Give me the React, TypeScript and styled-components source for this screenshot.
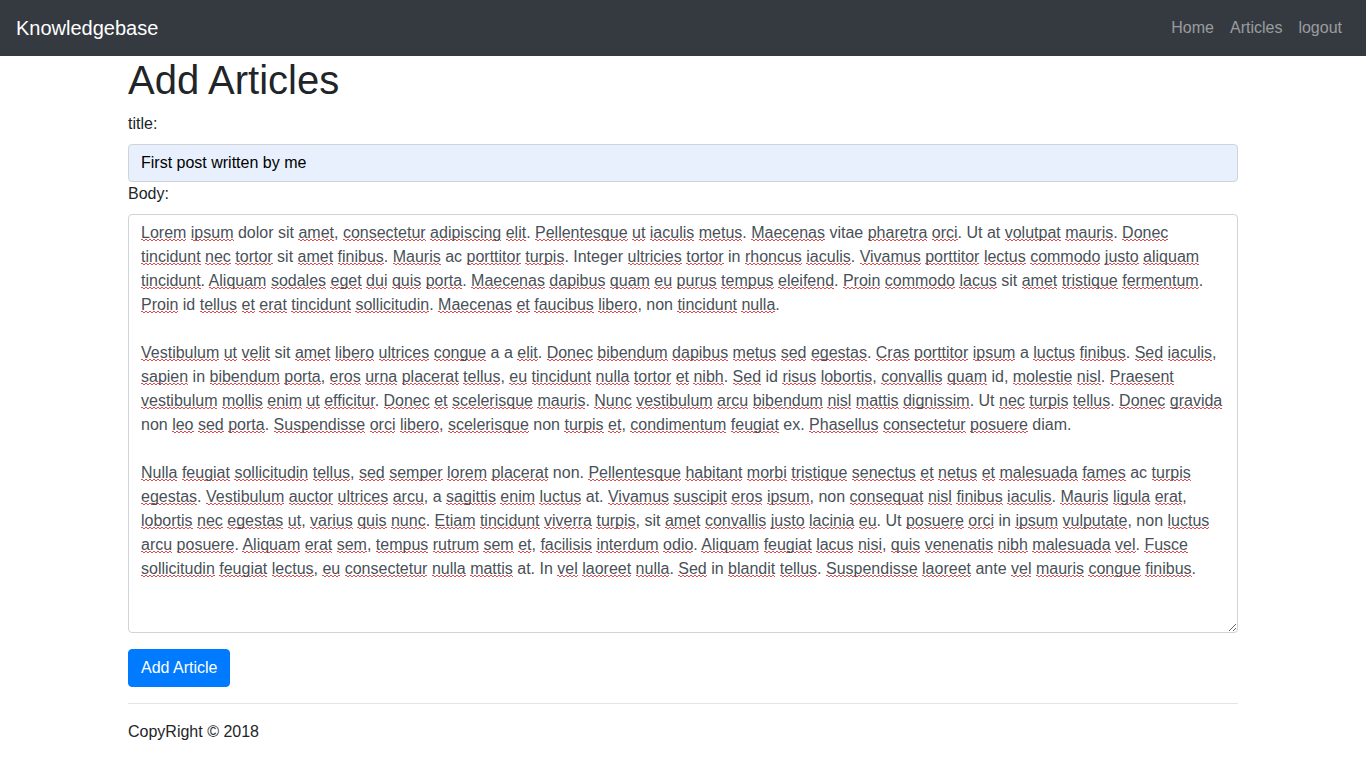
import React from "react";
import styled, { createGlobalStyle } from "styled-components";

const GlobalStyle = createGlobalStyle`
  *, *::before, *::after { box-sizing: border-box; }
  html, body { margin: 0; padding: 0; }
  body {
    font-family: "Liberation Sans", Arial, sans-serif;
    font-size: 16px;
    line-height: 1.5;
    color: #212529;
    background: #fff;
  }
`;

const Navbar = styled.nav`
  display: flex;
  align-items: center;
  justify-content: space-between;
  height: 56px;
  padding: 8px 16px;
  background: #343a40;
`;

const Brand = styled.a`
  font-size: 20px;
  line-height: 30px;
  padding: 5px 0;
  color: #fff;
  text-decoration: none;
`;

const NavList = styled.ul`
  display: flex;
  list-style: none;
  margin: 0;
  padding: 0;
`;

const NavLink = styled.a`
  display: block;
  padding: 8px;
  color: rgba(255, 255, 255, 0.5);
  text-decoration: none;
`;

const Container = styled.main`
  width: 1140px;
  margin: 0 auto;
  padding: 0 15px;
`;

const Title = styled.h1`
  margin: 0 0 8px;
  font-size: 40px;
  font-weight: 500;
  line-height: 1.2;
`;

const Label = styled.label`
  display: block;
  margin-bottom: 8px;
`;

const Input = styled.input`
  display: block;
  width: 100%;
  height: 38px;
  padding: 6px 12px;
  font-family: inherit;
  font-size: 16px;
  line-height: 1.5;
  color: #000;
  background: #e8f0fe;
  border: 1px solid #ced4da;
  border-radius: 4px;
  outline: none;
`;

const TextBox = styled.div`
  width: 100%;
  height: 419px;
  padding: 6px 12px;
  font-size: 16px;
  line-height: 24px;
  color: #495057;
  background: #fff;
  border: 1px solid #ced4da;
  border-radius: 4px;
  overflow: auto;
  resize: vertical;
  white-space: pre-wrap;
`;

const Misspelled = styled.span`
  background-image: linear-gradient(90deg, #e44848 0 2px, transparent 2px),
    linear-gradient(90deg, #e44848 0 2px, transparent 2px);
  background-size: 4px 1px, 4px 1px;
  background-position: 0 calc(100% - 1px), 2px 100%;
  background-repeat: repeat-x;
`;

const Button = styled.button`
  display: inline-block;
  margin-top: 16px;
  padding: 6px 12px;
  font-family: inherit;
  font-size: 16px;
  line-height: 1.5;
  color: #fff;
  background: #007bff;
  border: 1px solid #007bff;
  border-radius: 4px;
`;

const Rule = styled.hr`
  margin: 16px 0;
  border: 0;
  border-top: 1px solid rgba(0, 0, 0, 0.1);
`;

const Footer = styled.p`
  margin: 0 0 16px;
`;

const BODY = `Lorem ipsum dolor sit amet, consectetur adipiscing elit. Pellentesque ut iaculis metus. Maecenas vitae pharetra orci. Ut at volutpat mauris. Donec tincidunt nec tortor sit amet finibus. Mauris ac porttitor turpis. Integer ultricies tortor in rhoncus iaculis. Vivamus porttitor lectus commodo justo aliquam tincidunt. Aliquam sodales eget dui quis porta. Maecenas dapibus quam eu purus tempus eleifend. Proin commodo lacus sit amet tristique fermentum. Proin id tellus et erat tincidunt sollicitudin. Maecenas et faucibus libero, non tincidunt nulla.

Vestibulum ut velit sit amet libero ultrices congue a a elit. Donec bibendum dapibus metus sed egestas. Cras porttitor ipsum a luctus finibus. Sed iaculis, sapien in bibendum porta, eros urna placerat tellus, eu tincidunt nulla tortor et nibh. Sed id risus lobortis, convallis quam id, molestie nisl. Praesent vestibulum mollis enim ut efficitur. Donec et scelerisque mauris. Nunc vestibulum arcu bibendum nisl mattis dignissim. Ut nec turpis tellus. Donec gravida non leo sed porta. Suspendisse orci libero, scelerisque non turpis et, condimentum feugiat ex. Phasellus consectetur posuere diam.

Nulla feugiat sollicitudin tellus, sed semper lorem placerat non. Pellentesque habitant morbi tristique senectus et netus et malesuada fames ac turpis egestas. Vestibulum auctor ultrices arcu, a sagittis enim luctus at. Vivamus suscipit eros ipsum, non consequat nisl finibus iaculis. Mauris ligula erat, lobortis nec egestas ut, varius quis nunc. Etiam tincidunt viverra turpis, sit amet convallis justo lacinia eu. Ut posuere orci in ipsum vulputate, non luctus arcu posuere. Aliquam erat sem, tempus rutrum sem et, facilisis interdum odio. Aliquam feugiat lacus nisi, quis venenatis nibh malesuada vel. Fusce sollicitudin feugiat lectus, eu consectetur nulla mattis at. In vel laoreet nulla. Sed in blandit tellus. Suspendisse laoreet ante vel mauris congue finibus.`;

const KNOWN = new Set([
  "dolor", "sit", "vitae", "Ut", "at", "ac", "Integer", "in", "In", "id",
  "non", "a", "ex", "diam", "ante",
]);

function renderBody(text: string) {
  const parts = text.split(/([A-Za-z]+)/);
  return parts.map((p, i) => {
    if (/^[A-Za-z]+$/.test(p) && !KNOWN.has(p)) {
      return <Misspelled key={i}>{p}</Misspelled>;
    }
    return <React.Fragment key={i}>{p}</React.Fragment>;
  });
}

export default function App() {
  return (
    <>
      <GlobalStyle />
      <Navbar>
        <Brand href="#">Knowledgebase</Brand>
        <NavList>
          <li><NavLink href="#">Home</NavLink></li>
          <li><NavLink href="#">Articles</NavLink></li>
          <li><NavLink href="#">logout</NavLink></li>
        </NavList>
      </Navbar>
      <Container>
        <Title>Add Articles</Title>
        <form onSubmit={(e) => e.preventDefault()}>
          <Label htmlFor="title">title:</Label>
          <Input id="title" type="text" defaultValue="First post written by me" />
          <Label>Body:</Label>
          <TextBox role="textbox" aria-multiline="true">{renderBody(BODY)}</TextBox>
          <Button type="submit">Add Article</Button>
        </form>
        <Rule />
        <Footer>CopyRight © 2018</Footer>
      </Container>
    </>
  );
}
